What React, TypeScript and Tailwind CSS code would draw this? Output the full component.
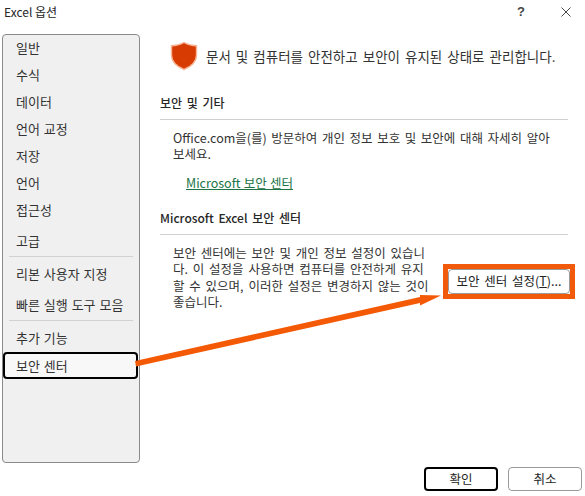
const topItems = ["일반", "수식", "데이터", "언어 교정", "저장", "언어", "접근성"];

/**
 * Left navigation list
 */
function Sidebar() {
  return (
    <nav className="w-[138px] h-[429px] ml-[2px] shrink-0 bg-[#f0f0f0] border border-[#8a8a8a] rounded-[4px] text-[13px] text-[#333] [word-spacing:1px]">
      {topItems.map((item) => (
        <NavItem key={item} label={item} />
      ))}
      <div className="h-[30px] mt-[2px] pl-[13px] flex items-center"><span>고급</span></div>
      <div className="h-px bg-[#d2d2d2] mx-[6px]" />
      <div className="h-[31px] mt-[1px] pl-[13px] flex items-center"><span>리본 사용자 지정</span></div>
      <div className="h-[31px] pl-[13px] flex items-center"><span>빠른 실행 도구 모음</span></div>
      <div className="h-px bg-[#d2d2d2] mx-[6px] mb-[4px]" />
      <NavItem label="추가 기능" />
      <div className="h-[27px] pl-[11px] mr-[1px] flex items-center bg-[#f8f8f8] border-2 border-black rounded-[4px]">
        <span>보안 센터</span>
      </div>
    </nav>
  );
}

function NavItem({ label }: { label: string }) {
  return <div className="h-[27px] pb-[2px] pl-[13px] flex items-center">{label}</div>;
}

function Shield() {
  return (
    <svg width="28" height="30" viewBox="0 0 28 30" className="shrink-0">
      <path
        d="M14 1.5 C10.5 3.5 6 4.8 1.5 4.8 L1.5 14 C1.5 21 7 25.5 14 28.5 C21 25.5 26.5 21 26.5 14 L26.5 4.8 C22 4.8 17.5 3.5 14 1.5 Z"
        fill="#d83b01"
        stroke="#f7b595"
        strokeWidth="1.4"
      />
    </svg>
  );
}

function SectionHeading({ children }: { children: string }) {
  return (
    <div className="font-medium text-[12px] leading-[18px] pb-[7px] border-b border-[#d0d0d0] text-[#262626] [word-spacing:2px]">
      {children}
    </div>
  );
}

/**
 * Orange callout arrow and box laid over the dialog
 */
function Callout() {
  return (
    <>
      <div className="absolute left-[443px] top-[264px] w-[132px] h-[35px] border-[5px] border-[#f05a0a]" />
      <svg width="585" height="496" className="absolute left-0 top-0 pointer-events-none">
        <polygon
          points="135,361 420,297 420,295 441,295.5 420,305.5 420,303 136,366.5"
          fill="#f45a05"
        />
      </svg>
    </>
  );
}

export default function App() {
  return (
    <div className="relative w-[585px] h-[496px] overflow-hidden bg-white text-[#262626] [font-family:'Noto_Sans_CJK_KR','Noto_Sans',sans-serif]">
      <header className="h-[22px] pl-[4px] pr-[14px] flex items-center justify-between text-[12px]">
        <span className="mt-[1px]">Excel 옵션</span>
        <div className="flex items-center gap-[36px] mt-[1px] [font-family:'Liberation_Sans',sans-serif]">
          <span className="font-bold text-[13px] text-[#444]">?</span>
          <svg width="10" height="10" viewBox="0 0 10 10">
            <path d="M0.5 0.5 L9.5 9.5 M9.5 0.5 L0.5 9.5" stroke="#333" strokeWidth="0.9" />
          </svg>
        </div>
      </header>

      <div className="flex mt-[12px]">
        <Sidebar />
        <main className="ml-[20px] w-[408px] text-[13px] text-[#333]">
          <div className="flex items-center gap-[8px] ml-[10px] mt-[7px]">
            <Shield />
            <span className="text-[13.5px] [word-spacing:2px]">문서 및 컴퓨터를 안전하고 보안이 유지된 상태로 관리합니다.</span>
          </div>

          <div className="mt-[23px]">
            <SectionHeading>보안 및 기타</SectionHeading>
          </div>
          <p className="mt-[10px] ml-[13px] text-[12.5px] leading-[16px] [word-spacing:1.8px]">
            Office.com을(를) 방문하여 개인 정보 보호 및 보안에 대해 자세히 알아
            <br />
            보세요.
          </p>
          <a className="block mt-[13px] ml-[26px] w-fit text-[12.5px] leading-[15px] text-[#217346] underline [word-spacing:0.5px]">
            Microsoft 보안 센터
          </a>

          <div className="mt-[19px]">
            <SectionHeading>Microsoft Excel 보안 센터</SectionHeading>
          </div>
          <div className="flex mt-[10px] ml-[13px]">
            <p className="w-[275px] shrink-0 text-[12.5px] leading-[16.3px] [word-spacing:2px]">
              보안 센터에는 보안 및 개인 정보 설정이 있습니
              <br />
              다. 이 설정을 사용하면 컴퓨터를 안전하게 유지
              <br />
              할 수 있으며, 이러한 설정은 변경하지 않는 것이
              <br />
              좋습니다.
            </p>
            <button className="mt-[24px] w-[122px] h-[25px] shrink-0 bg-white border border-[#9a9a9a] rounded-[4px] text-[12.5px] text-[#222] [word-spacing:2px]">
              보안 센터 설정(<span className="underline">T</span>)...
            </button>
          </div>
        </main>
      </div>

      <footer className="flex justify-end gap-[10px] pr-[3px] mt-[4px] text-[12.5px]">
        <button className="w-[74px] h-[24px] bg-white border-2 border-black rounded-[4px]">확인</button>
        <button className="w-[74px] h-[24px] bg-white border border-[#9a9a9a] rounded-[4px]">취소</button>
      </footer>

      <Callout />
    </div>
  );
}
